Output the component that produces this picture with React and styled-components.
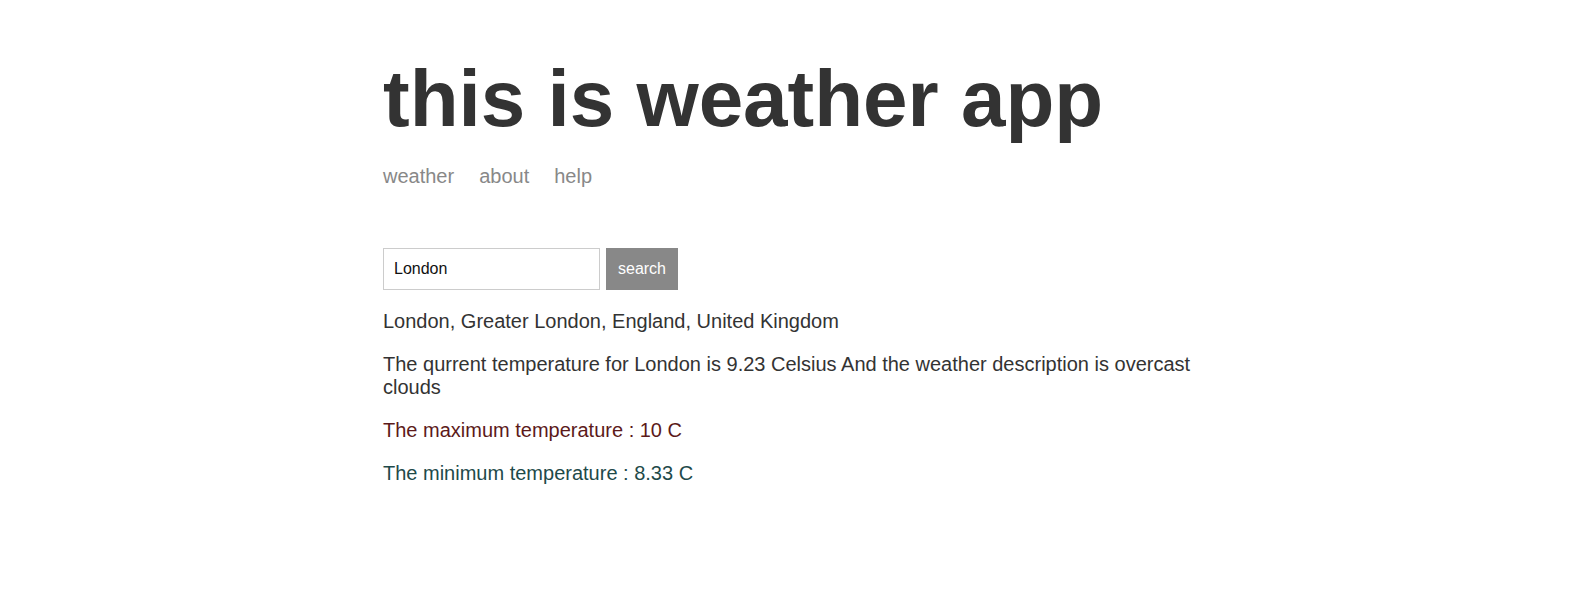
import React, { useState } from "react";
import styled, { createGlobalStyle } from "styled-components";

const GlobalStyle = createGlobalStyle`
  body {
    margin: 0;
    background: #fff;
    font-family: "Liberation Sans", Arial, sans-serif;
    color: #333;
  }
`;

const Page = styled.main`
  width: 813px;
  margin: 0 auto;
  padding-top: 53px;
`;

const Title = styled.h1`
  margin: 0;
  font-size: 80px;
  font-weight: 700;
  color: #333;
  line-height: 92px;
`;

const Nav = styled.nav`
  display: flex;
  gap: 25px;
  margin-top: 20px;
`;

const NavLink = styled.a`
  font-size: 20px;
  line-height: 23px;
  color: #888;
  text-decoration: none;
  cursor: pointer;
`;

const Form = styled.form`
  display: flex;
  gap: 6px;
  margin-top: 60px;
`;

const Input = styled.input`
  box-sizing: border-box;
  width: 217px;
  height: 42px;
  border: 1px solid #ccc;
  padding: 0 10px;
  font-size: 16px;
  font-family: inherit;
  color: #111;
  outline: none;
`;

const Button = styled.button`
  box-sizing: border-box;
  height: 42px;
  width: 72px;
  border: none;
  background: #888;
  color: #fff;
  font-size: 16px;
  font-family: inherit;
  cursor: pointer;
`;

const Message = styled.p`
  margin: 20px 0 0;
  font-size: 20px;
  line-height: 23px;
  color: ${(p) => p.$color || "#333"};
`;

const App = () => {
  const [city, setCity] = useState("London");

  return (
    <>
      <GlobalStyle />
      <Page>
        <Title>this is weather app</Title>
        <Nav>
          <NavLink>weather</NavLink>
          <NavLink>about</NavLink>
          <NavLink>help</NavLink>
        </Nav>
        <Form onSubmit={(e) => e.preventDefault()}>
          <Input value={city} onChange={(e) => setCity(e.target.value)} />
          <Button type="submit">search</Button>
        </Form>
        <Message>London, Greater London, England, United Kingdom</Message>
        <Message>
          The qurrent temperature for London is 9.23 Celsius And the weather
          description is overcast clouds
        </Message>
        <Message $color="#5c1a1a">The maximum temperature : 10 C</Message>
        <Message $color="#1e4a4a">The minimum temperature : 8.33 C</Message>
      </Page>
    </>
  );
};

export default App;
